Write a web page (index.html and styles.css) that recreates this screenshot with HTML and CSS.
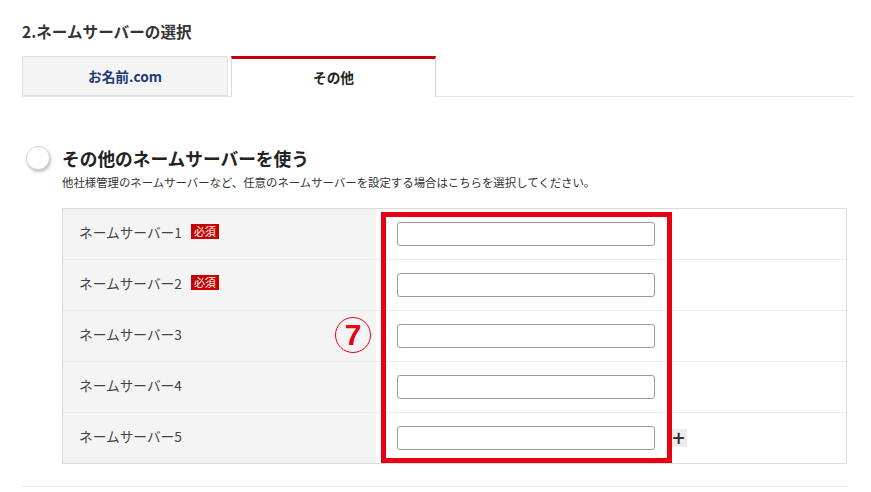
FILE: index.html
```html
<!DOCTYPE html>
<html lang="ja">
<head>
<meta charset="utf-8">
<link rel="stylesheet" href="styles.css">
</head>
<body>
<div class="page">
  <h2 class="step-title">2.ネームサーバーの選択</h2>
  <div class="tabs">
    <div class="tab tab-off">お名前.com</div>
    <div class="tab tab-on">その他</div>
  </div>

  <div class="option">
    <div class="option-head">
      <span class="radio"></span>
      <span class="option-title">その他のネームサーバーを使う</span>
    </div>
    <p class="option-desc">他社様管理のネームサーバーなど、任意のネームサーバーを設定する場合はこちらを選択してください。</p>
  </div>

  <div class="ns-table">
    <div class="row">
      <div class="label">ネームサーバー1<span class="req">必須</span></div>
      <div class="value"><input class="field" type="text"></div>
    </div>
    <div class="row">
      <div class="label">ネームサーバー2<span class="req">必須</span></div>
      <div class="value"><input class="field" type="text"></div>
    </div>
    <div class="row">
      <div class="label">ネームサーバー3</div>
      <div class="value"><input class="field" type="text"></div>
    </div>
    <div class="row">
      <div class="label">ネームサーバー4</div>
      <div class="value"><input class="field" type="text"></div>
    </div>
    <div class="row">
      <div class="label">ネームサーバー5</div>
      <div class="value"><input class="field" type="text"><span class="plus">+</span></div>
    </div>
    <div class="highlight"></div>
    <div class="marker">7</div>
  </div>

  <div class="divider"></div>
</div>
</body>
</html>
```

FILE: styles.css
```css
html, body {
  margin: 0;
  padding: 0;
  background: #fff;
}
body {
  font-family: "Noto Sans CJK JP", "Noto Sans", sans-serif;
  color: #333;
}
.page {
  padding: 21px 0 0 22px;
  width: 833px;
}
.step-title {
  margin: 0;
  font-size: 15.6px;
  line-height: 20px;
  font-weight: bold;
  color: #333;
}
.tabs {
  margin-top: 15px;
  display: flex;
  border-bottom: 1px solid #e6e6e6;
  height: 40px;
}
.tab {
  box-sizing: border-box;
  height: 41px;
  display: flex;
  align-items: center;
  justify-content: center;
  font-size: 13.7px;
  font-weight: bold;
}
.tab-off {
  width: 206px;
  height: 40px;
  background: #f4f4f4;
  border: 1px solid #e2e2e2;
  color: #1f3a78;
  margin-right: 3px;
}
.tab-on {
  width: 205px;
  background: #fff;
  border-top: 3px solid #c40000;
  border-left: 1px solid #d8d8d8;
  border-right: 1px solid #d8d8d8;
  color: #222;
  padding-bottom: 2px;
}
.option {
  margin-top: 49px;
}
.option-head {
  display: flex;
  align-items: center;
  height: 24px;
}
.radio {
  box-sizing: border-box;
  width: 24px;
  height: 24px;
  border-radius: 50%;
  background: #fff;
  border: 1px solid #d4d4d4;
  box-shadow: 1px 2px 3px rgba(0,0,0,0.25);
  margin-left: 4px;
}
.option-title {
  margin-left: 12px;
  font-size: 17.7px;
  font-weight: bold;
  color: #222;
  line-height: 24px;
}
.option-desc {
  margin: 4px 0 0 40px;
  font-size: 11.4px;
  line-height: 16px;
  color: #333;
}
.ns-table {
  position: relative;
  margin: 18px 0 0 40px;
  width: 785px;
  border: 1px solid #dcdcdc;
  box-sizing: border-box;
}
.row {
  display: flex;
  height: 51px;
  border-top: 1px solid #ececec;
  box-sizing: border-box;
}
.row:first-child {
  border-top: none;
  height: 50px;
}
.label {
  width: 313px;
  background: #f4f4f4;
  display: flex;
  align-items: center;
  padding-left: 16px;
  padding-bottom: 5px;
  box-sizing: border-box;
  font-size: 13.7px;
  color: #444;
}
.req {
  display: inline-block;
  margin-left: 9px;
  background: #c70000;
  color: #fff;
  font-size: 11px;
  line-height: 15px;
  padding: 0 3px;
}
.value {
  flex: 1;
  display: flex;
  align-items: center;
  padding-left: 21px;
}
.field {
  box-sizing: border-box;
  width: 258px;
  height: 24px;
  border: 1px solid #9a9a9a;
  border-radius: 3px;
  background: #fff;
  margin: 0;
  padding: 0;
}
.plus {
  margin-left: 15px;
  width: 17px;
  height: 18px;
  background: #ececec;
  color: #333;
  font-family: "DejaVu Sans", sans-serif;
  font-weight: bold;
  font-size: 17px;
  line-height: 18px;
  text-align: center;
}
.highlight {
  position: absolute;
  left: 318px;
  top: 3px;
  width: 291px;
  height: 251px;
  box-sizing: border-box;
  border: 5px solid #e60012;
}
.marker {
  position: absolute;
  left: 272px;
  top: 108px;
  width: 36px;
  height: 36px;
  box-sizing: border-box;
  border: 1.5px solid #e60012;
  border-radius: 50%;
  color: #e60012;
  font-family: "Liberation Sans", sans-serif;
  font-weight: bold;
  font-size: 30px;
  line-height: 33px;
  text-align: center;
}
.divider {
  margin-top: 22px;
  width: 826px;
  border-top: 1px solid #e8e8e8;
}
```
